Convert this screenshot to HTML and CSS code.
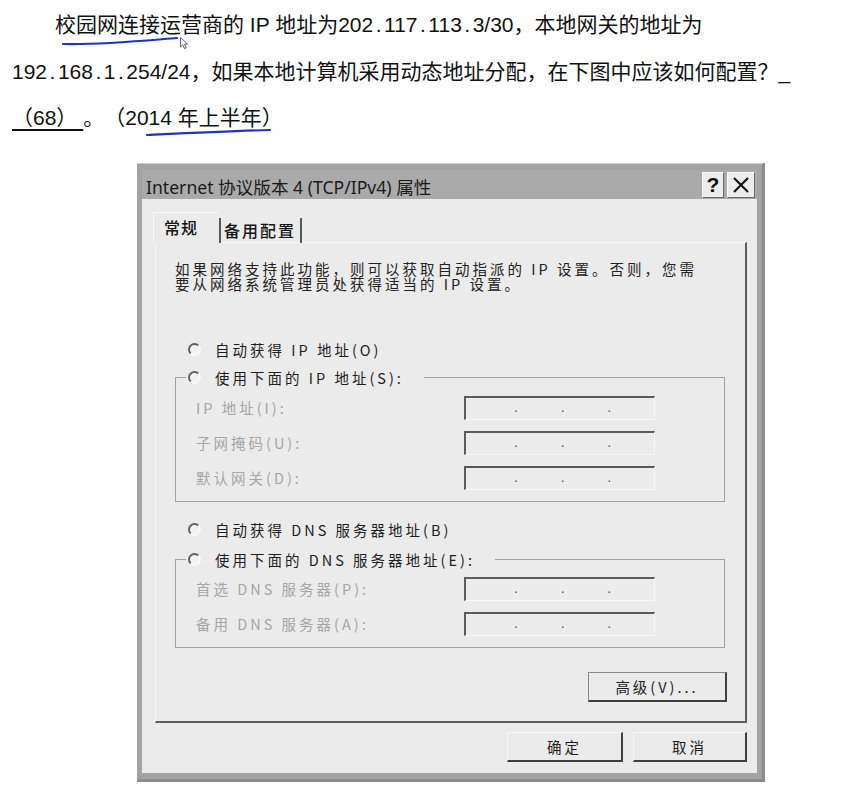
FILE: index.html
```html
<!DOCTYPE html>
<html lang="zh-CN">
<head>
<meta charset="utf-8">
<title>Internet 协议版本 4 (TCP/IPv4) 属性</title>
<link rel="stylesheet" href="styles.css">
</head>
<body>
<div class="question">
  <p class="q-text"><span class="first">校园网连接运营商的 IP 地址为202<span class="pt">.</span>117<span class="pt">.</span>113<span class="pt">.</span>3/30，本地网关的地址为</span><br>192<span class="pt">.</span>168<span class="pt">.</span>1<span class="pt">.</span>254/24，如果本地计算机采用动态地址分配，在下图中应该如何配置？_<br><span class="blank">（68）&nbsp;</span>。（2014 年上半年）</p>
  <svg class="marks" width="863" height="145" viewBox="0 0 863 145">
    <path d="M63 44 C 100 45, 140 41, 177 38" fill="none" stroke="#1e34c4" stroke-width="2.2" stroke-linecap="round"/>
    <path d="M147 135 C 190 133, 232 131, 270 130" fill="none" stroke="#1e34c4" stroke-width="2.2" stroke-linecap="round"/>
    <path d="M180.5 37.5 L180.5 47 L182.8 44.8 L184.6 48.6 L186.2 47.8 L184.5 44.1 L187.6 44.1 Z" fill="#f4f4f4" stroke="#555" stroke-width="0.9" stroke-linejoin="round"/>
  </svg>
</div>

<div class="dialog">
  <div class="titlebar">
    <span class="title">Internet 协议版本 4 (TCP/IPv4) 属性</span>
    <div class="tb-btns">
      <span class="tb-btn help">?</span>
      <span class="tb-btn close"><svg width="18" height="18" viewBox="0 0 18 18"><path d="M2 2 L16 16 M16 2 L2 16" stroke="#111" stroke-width="2.1" fill="none"/></svg></span>
    </div>
  </div>
  <div class="body">
    <div class="tabs">
      <div class="tab active">常规</div>
      <div class="tab">备用配置</div>
    </div>
    <div class="panel">
      <p class="desc">如果网络支持此功能，则可以获取自动指派的 IP 设置。否则，您需<br>要从网络系统管理员处获得适当的 IP 设置。</p>

      <div class="radio-row ip-auto"><span class="radio"></span><span>自动获得 IP 地址(O)</span></div>
      <fieldset class="group">
        <legend class="radio-row"><span class="radio"></span><span>使用下面的 IP 地址(S):</span></legend>
        <div class="fields">
          <span class="lbl">IP 地址(I):</span>
          <span class="ip"><span>.</span><span>.</span><span>.</span></span>
          <span class="lbl">子网掩码(U):</span>
          <span class="ip"><span>.</span><span>.</span><span>.</span></span>
          <span class="lbl">默认网关(D):</span>
          <span class="ip"><span>.</span><span>.</span><span>.</span></span>
        </div>
      </fieldset>

      <div class="radio-row dns-auto"><span class="radio"></span><span>自动获得 DNS 服务器地址(B)</span></div>
      <fieldset class="group dns">
        <legend class="radio-row"><span class="radio"></span><span>使用下面的 DNS 服务器地址(E):</span></legend>
        <div class="fields">
          <span class="lbl">首选 DNS 服务器(P):</span>
          <span class="ip"><span>.</span><span>.</span><span>.</span></span>
          <span class="lbl">备用 DNS 服务器(A):</span>
          <span class="ip"><span>.</span><span>.</span><span>.</span></span>
        </div>
      </fieldset>

      <div class="adv-row"><button class="btn adv">高级(V)...</button></div>
    </div>
    <div class="actions">
      <button class="btn ok">确定</button>
      <button class="btn cancel">取消</button>
    </div>
  </div>
</div>
</body>
</html>
```

FILE: styles.css
```css
* { box-sizing: border-box; }
html, body { margin: 0; padding: 0; background: #fff; }
body { width: 863px; text-spacing-trim: space-all; }

/* question text */
.question {
  position: relative;
  padding: 2px 0 0 12px;
  font-family: "Liberation Sans", "Noto Sans CJK SC", sans-serif;
  font-size: 21px;
  line-height: 46.5px;
  color: #111;
}
.q-text { margin: 0; white-space: nowrap; }
.q-text .first { padding-left: 43px; }
.pt { padding: 0 2.5px; }
.blank {
  text-decoration: underline;
  text-decoration-thickness: 1.5px;
  text-underline-offset: 4px;
}
.marks { position: absolute; left: 0; top: 0; pointer-events: none; }

/* dialog window */
.dialog {
  margin: 21px 0 0 137px;
  width: 628px;
  background: #a3a3a3;
  border-top: 1px solid #cdcdcd;
  border-right: 3px solid #8c8c8c;
  border-bottom: 3px solid #8c8c8c;
  padding: 6px 5px 6px 5px;
  font-family: "Noto Sans CJK SC", sans-serif;
  color: #1e1e1e;
}
.titlebar {
  height: 29px;
  background: #aaaaaa;
  display: flex;
  justify-content: space-between;
  align-items: flex-start;
  padding: 2px 2px 0 4px;
}
.title {
  font-family: "Noto Sans", "Noto Sans CJK SC", sans-serif;
  font-size: 17.6px;
  line-height: 26px;
  padding-top: 2px;
  color: #1a1a1a;
}
.tb-btns { display: flex; gap: 3px; }
.tb-btn {
  height: 26px;
  background: #ececec;
  border: 1px solid;
  border-color: #fbfbfb #6a6a6a #6a6a6a #fbfbfb;
  display: flex;
  align-items: center;
  justify-content: center;
}
.help {
  width: 22px;
  font-family: "Liberation Sans", sans-serif;
  font-weight: bold;
  font-size: 21px;
  color: #111;
}
.close { width: 28px; }

.body {
  background: #ebebeb;
  padding: 13px 10px 11px 13px;
}

/* tabs */
.tabs {
  display: flex;
  align-items: flex-end;
  height: 31px;
  margin-bottom: -1px;
  position: relative;
  z-index: 1;
  font-size: 16px;
  font-weight: 500;
  color: #151515;
}
.tab {
  height: 25px;
  line-height: 24px;
  padding: 0 4px 0 3px;
  border-left: 2px solid #585858;
  border-right: 2px solid #585858;
  letter-spacing: 2px;
}
.tab.active {
  height: 31px;
  line-height: 29px;
  width: 66px;
  margin-left: -2px;
  padding-left: 10px;
  background: #ebebeb;
  border: 1px solid;
  border-color: #f9f9f9 transparent transparent #f9f9f9;
  letter-spacing: 1px;
}

/* tab panel */
.panel {
  width: 592px;
  border-top: 1px solid #f9f9f9;
  border-left: 1px solid #f6f6f6;
  border-right: 2px solid #5e5e5e;
  border-bottom: 2px solid #5e5e5e;
  padding: 18px 0 19px 0;
  font-size: 14.5px;
  letter-spacing: 3px;
}
.desc {
  margin: 0 0 0 19px;
  line-height: 15px;
  color: #222;
  white-space: nowrap;
}
.radio-row {
  display: flex;
  align-items: center;
  gap: 14px;
  height: 20px;
  white-space: nowrap;
  color: #1e1e1e;
}
.ip-auto { margin: 49px 0 0 32px; }
.dns-auto { margin: 18px 0 0 32px; }
.radio {
  flex: none;
  width: 13px;
  height: 13px;
  border-radius: 50%;
  border: 2px solid;
  border-color: #5f5f5f #fafafa #fafafa #5f5f5f;
  background: #f3f3f3;
}

.group {
  margin: 8px 0 0 19px;
  width: 550px;
  min-width: 0;
  border: 1px solid #a2a2a2;
  padding: 8px 10px 11px 10px;
}
.group.dns { margin-top: 10px; padding-top: 7px; }
.group legend { padding: 0 20px 0 2px; }

.fields {
  display: grid;
  grid-template-columns: 268px 191px;
  row-gap: 11px;
  align-items: center;
  padding-left: 10px;
}
.lbl { color: #a6a6a6; white-space: nowrap; line-height: 20px; }
.ip {
  height: 24px;
  display: flex;
  padding-left: 48px;
  border-top: 2px solid #5b5b5b;
  border-left: 2px solid #5b5b5b;
  border-right: 1px solid #f7f7f7;
  border-bottom: 1px solid #f7f7f7;
  background: #ececec;
  font-family: "Liberation Sans", sans-serif;
  font-size: 14px;
  line-height: 18px;
  letter-spacing: 0;
  color: #555;
}
.ip span { width: 48px; }

.adv-row {
  margin-top: 24px;
  display: flex;
  justify-content: flex-end;
  padding-right: 18px;
}
.btn {
  height: 30px;
  background: #ebebeb;
  border: 1px solid;
  border-color: #f7f7f7 #3e3e3e #3e3e3e #f7f7f7;
  border-right-width: 2px;
  border-bottom-width: 2px;
  font-family: "Noto Sans CJK SC", sans-serif;
  font-size: 14.5px;
  letter-spacing: 3px;
  color: #1e1e1e;
  padding: 0;
}
.btn.adv { width: 139px; border-color: #8a8a8a #3e3e3e #3e3e3e #8a8a8a; }
.actions {
  margin-top: 9px;
  display: flex;
  justify-content: flex-end;
  gap: 10px;
}
.btn.ok { width: 116px; }
.btn.cancel { width: 114px; }
```
